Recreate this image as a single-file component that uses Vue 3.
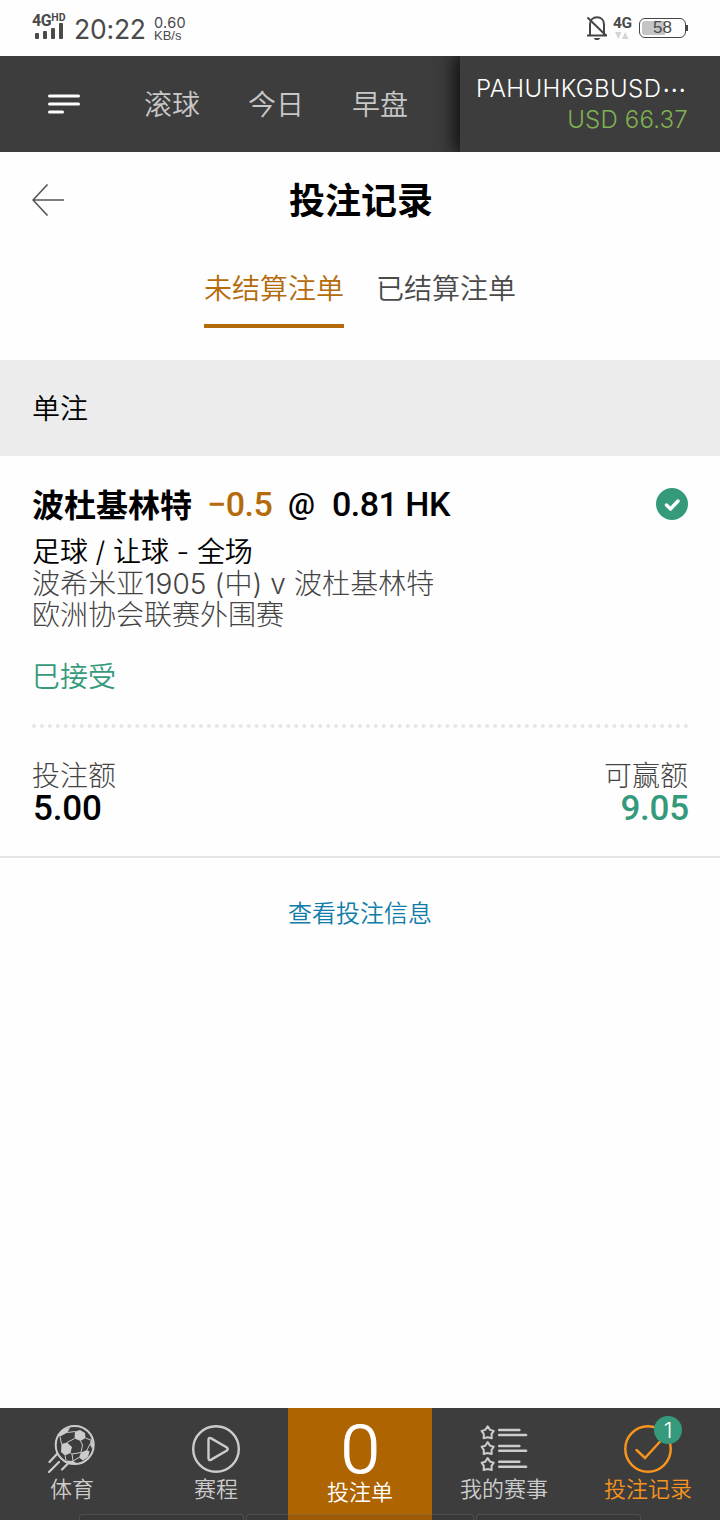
<script setup>
const tabs = [
  { label: '未结算注单', active: true },
  { label: '已结算注单', active: false },
]
const navLinks = ['滚球', '今日', '早盘']
const starRows = [7.9, 24.4, 41]
</script>

<template>
  <div class="screen">
    <header class="status">
      <div class="signal">
        <div class="net">4G<span class="hd">HD</span></div>
        <svg class="bars" width="28" height="16" viewBox="0 0 28 16">
          <g fill="#4a4a4a">
            <rect x="0" y="10" width="4" height="6" rx="1" />
            <rect x="8" y="8" width="4" height="8" rx="1" />
            <rect x="16" y="5" width="4" height="11" rx="1" />
            <rect x="24" y="0" width="4" height="16" rx="1" />
          </g>
        </svg>
      </div>
      <div class="clock">20:22</div>
      <div class="speed"><span class="rate">0.60</span><span class="unit">KB/s</span></div>
      <svg class="bell" width="22" height="26" viewBox="0 0 22 26" fill="none" stroke="#454545" stroke-width="2">
        <path d="M4 20V9.500C4 5 7 2.200 11 2.200S18 5 18 9.500V20M1 20.500H21" />
        <path d="M1.500 2.500L20 20.500" />
        <path d="M7.500 23H14.500L12.500 25H9.500Z" fill="#454545" stroke="none" />
      </svg>
      <div class="data">
        <div class="net">4G</div>
        <svg width="14" height="7" viewBox="0 0 14 7" fill="#d5d5d5"><path d="M0 0H6.500L3.200 7ZM7 7H13.500L10.200 0Z" /></svg>
      </div>
      <div class="battery"><span class="level"></span><span class="pct">58</span></div>
      <span class="nub"></span>
    </header>

    <nav class="topnav">
      <svg class="menu" width="32" height="20" viewBox="0 0 32 20" stroke="#fff" stroke-width="3" stroke-linecap="round">
        <path d="M1.500 2H30.500M1.500 10H30.500M1.500 18H14.500" />
      </svg>
      <a v-for="l in navLinks" :key="l" class="navlink">{{ l }}</a>
      <div class="account">
        <div class="user">PAHUHKGBUSD<span class="more">⋯</span></div>
        <div class="balance">USD 66.37</div>
      </div>
    </nav>

    <div class="titlebar">
      <svg class="back" width="32" height="32" viewBox="0 0 32 32" fill="none" stroke="#555" stroke-width="1.600">
        <path d="M32 16H1M15.500 .5L1 16L15.500 31.500" />
      </svg>
      <h1>投注记录</h1>
    </div>

    <div class="tabs">
      <div v-for="t in tabs" :key="t.label" class="tab" :class="{ active: t.active }">{{ t.label }}</div>
    </div>

    <div class="section">单注</div>

    <article class="bet">
      <div class="pick">
        <span class="team">波杜基林特</span>
        <span class="handicap">−0.5</span>
        <span class="at">@</span>
        <span class="odds">0.81 HK</span>
        <svg class="ok" width="32" height="32" viewBox="0 0 32 32">
          <circle cx="16" cy="16" r="16" fill="#359a7c" />
          <path d="M10.500 17L14.500 21L22 13" fill="none" stroke="#fff" stroke-width="3.400" stroke-linecap="round" stroke-linejoin="round" />
        </svg>
      </div>
      <div class="market">足球 / 让球 - 全场</div>
      <div class="match">波希米亚1905 (中) v 波杜基林特</div>
      <div class="league">欧洲协会联赛外围赛</div>
      <div class="state">巳接受</div>
      <svg class="dots" width="656" height="4" viewBox="0 0 656 4">
        <path d="M2 2H655" stroke="#e6e6e6" stroke-width="4" stroke-linecap="round" stroke-dasharray="0 7.950" />
      </svg>
      <div class="amounts">
        <div><div class="label">投注额</div><div class="value">5.00</div></div>
        <div class="win"><div class="label">可赢额</div><div class="value">9.05</div></div>
      </div>
    </article>

    <a class="info">查看投注信息</a>

    <footer class="bottom">
      <div class="item">
        <svg width="48" height="48" viewBox="0 0 48 48" fill="none" stroke="#ccc">
          <circle cx="26.700" cy="20" r="19" stroke-width="2" />
          <g fill="#ccc" stroke="none">
            <path d="M27 6.500L32 5L37 8L37.500 13L32.500 16L26.500 13.500Z" />
            <path d="M13.500 19L19 17.500L24 22L22.500 28L17 30.500L13 27Z" />
            <path d="M33 27.500L39 25L41.500 26.500L40 32L35 35.500L31 32.500Z" />
            <path d="M10 10.500L16 4L22 3L19.500 7.500L12 11.500Z" />
            <path d="M43 12.500L45.500 20L44 24L42 19Z" />
            <path d="M18 35.500L25 36L30 39L21 38.500Z" />
          </g>
          <path d="M19.500 7.500L27 6.500M26.500 13.500L19 17.500M32.500 16L34.500 20L33 27.500L24 29L22.500 28M37.500 13L42.500 15M24 29L25 36M31 32.500L25 36M13.500 19L12 11.500M39 25L42 19M17 30.500L18 35.500" stroke-width="1" />
          <path d="M9 29L1.500 37M11 37L1 47M20.500 38L14 44.500" stroke-width="2.200" stroke-linecap="round" />
        </svg>
        <span>体育</span>
      </div>
      <div class="item">
        <svg width="48" height="48" viewBox="0 0 48 48" fill="none" stroke="#ccc" stroke-width="2.400">
          <circle cx="24" cy="24" r="22.800" />
          <path d="M16.500 15Q16.500 12 19.200 13.400L34.500 22.300Q37 24 34.500 25.700L19.200 34.600Q16.500 36 16.500 33Z" />
        </svg>
        <span>赛程</span>
      </div>
      <div class="item slip">
        <div class="count">0</div>
        <span>投注单</span>
      </div>
      <div class="item">
        <svg width="48" height="50" viewBox="0 0 48 50" fill="none" stroke="#ccc" stroke-width="2.100">
          <g v-for="y in starRows" :key="y" :transform="`translate(7 ${y})`">
            <path d="M0-6.500L2.500-2.800L6.300-1.800L4 1.600L4.200 5.800L0 4.800L-4.200 5.800L-4 1.600L-6.300-1.800L-2.500-2.800Z" stroke-linejoin="round" />
            <path d="M12-2.600H33M12 2.500H40" stroke-width="2.600" stroke-linecap="round" />
          </g>
        </svg>
        <span>我的赛事</span>
      </div>
      <div class="item current">
        <svg width="48" height="48" viewBox="0 0 48 48" fill="none" stroke="#f7941d" stroke-width="2.500">
          <circle cx="24" cy="24" r="22.700" />
          <path d="M12.500 25L21 33L37 15.500" stroke-linecap="round" />
        </svg>
        <span>投注记录</span>
        <b class="badge">1</b>
      </div>
      <div class="keys"><i class="side"></i><i class="mid"></i><i class="side"></i></div>
    </footer>
  </div>
</template>

<style>
body { margin: 0; background: #fff; }
</style>

<style scoped>
.screen {
  width: 720px; height: 1520px; display: flex; flex-direction: column; overflow: hidden;
  background: #fefefe; color: #000; font-family: Inter, "Noto Sans CJK SC", sans-serif; font-weight: 350;
  white-space: nowrap;
}
.status { height: 56px; flex: none; display: flex; align-items: flex-start; color: #4a4a4a; box-sizing: border-box; padding-left: 32px; }
.signal { width: 42px; padding-top: 12px; display: flex; flex-direction: column; }
.net { font: 700 16px/17px Roboto, sans-serif; letter-spacing: -.4px; }
.hd { font-size: 10.500px; vertical-align: 5px; line-height: 1px; letter-spacing: 0; }
.bars { margin: -6px 0 0 3px; }
.clock { font: 400 26.500px/32px Inter, sans-serif; width: 80px; padding-top: 13px; letter-spacing: -.2px; }
.speed { display: flex; flex-direction: column; padding-top: 16px; width: 432px; }
.rate { font: 400 14.500px/13px Inter, sans-serif; letter-spacing: .3px; }
.unit { font: 400 13px/13px "Liberation Sans", sans-serif; }
.bell { margin-top: 15px; flex: none; }
.data { width: 31px; padding: 15px 0 0 5px; box-sizing: border-box; display: flex; flex-direction: column; }
.data .net { font-size: 15.500px; }
.data svg { margin: 0 0 0 2px; }
.battery {
  margin-top: 18px; width: 47px; height: 20px; flex: none; box-sizing: border-box; border: 1.500px solid #454545; border-radius: 6px;
  padding: 2px; display: grid; align-items: center;
}
.level { grid-area: 1 / 1; width: 23px; height: 14px; background: #c5c5c5; border-radius: 3px 0 0 3px; }
.pct { grid-area: 1 / 1; text-align: center; font: 400 17px/14px "Liberation Sans", sans-serif; }
.nub { margin-top: 25px; width: 2px; height: 6px; background: #454545; }

.topnav { height: 96px; flex: none; background: #3d3d3d; display: flex; align-items: center; color: #c8c8c8; }
.menu { margin: 0 64px 0 48px; }
.navlink { font-size: 28px; line-height: 40px; width: 56px; margin-right: 48px; padding-top: 1px; }
.account {
  margin-left: 4px; width: 260px; height: 96px; box-sizing: border-box; background: #3d3d3d; padding: 17px 32px 0 16px;
  box-shadow: -4px 0 16px 2px #111; clip-path: inset(0 0 0 -30px);
}
.user { color: #fff; font-size: 24px; line-height: 31px; display: flex; letter-spacing: .4px; }
.more { font-family: "Noto Sans CJK SC"; font-weight: 400; margin-left: 1px; }
.balance { color: #7fb154; font-size: 24px; line-height: 31px; text-align: right; letter-spacing: .2px; }

.titlebar { height: 96px; flex: none; display: grid; grid-template-columns: 32px 1fr 32px; align-items: center; padding: 0 32px; }
h1 { margin: 0; padding: 2px 0 0 2px; text-align: center; font-size: 36px; line-height: 48px; font-weight: 700; }
.tabs { height: 112px; flex: none; display: flex; justify-content: center; gap: 32px; align-items: flex-start; }
.tab { height: 80px; box-sizing: border-box; font-size: 28px; line-height: 80px; padding-top: 1px; color: #4a4a4a; }
.active { color: #b46b0a; border-bottom: 4px solid #b46b0a; }
.section { height: 96px; flex: none; box-sizing: border-box; background: #ececec; padding: 1px 0 0 32px; font-size: 28px; line-height: 96px; }

.bet { height: 402px; flex: none; box-sizing: border-box; border-bottom: 2px solid #e4e4e4; padding: 24px 32px 0; }
.pick { display: flex; align-items: center; height: 48px; font: 500 34px/48px Roboto, sans-serif; letter-spacing: -.5px; }
.team { font: 700 32px/48px "Noto Sans CJK SC", sans-serif; width: 175px; letter-spacing: 0; margin-top: -3px; }
.handicap { color: #b46b0a; width: 81px; }
.at { width: 44px; font-size: 30px; }
.ok { margin-left: auto; }
.market { margin-top: 8px; font-size: 28px; line-height: 32px; letter-spacing: -.1px; }
.match, .league { font-size: 28px; line-height: 31px; color: #444; font-weight: 300; }
.match { letter-spacing: .1px; position: relative; top: 1px; }
.league { position: relative; top: 1px; }
.state { margin-top: 31px; font-size: 28px; line-height: 32px; color: #359a7c; }
.dots { display: block; margin-top: 31px; }
.amounts { display: flex; justify-content: space-between; margin-top: 32px; }
.label { font-size: 28px; line-height: 32px; color: #444; font-weight: 300; }
.value { font: 500 35px/34px Roboto, sans-serif; letter-spacing: -.2px; margin-left: 1px; }
.win { text-align: right; }
.win .value { color: #359a7c; margin-right: -1px; }
.info { margin: 38px auto 0; font-size: 24px; line-height: 36px; color: #0f7da8; }

.bottom { margin-top: auto; height: 112px; flex: none; background: #3d3d3d; display: flex; color: #ccc; position: relative; }
.item { flex: 1; display: flex; flex-direction: column; align-items: center; padding-top: 17px; font-size: 22px; line-height: 32px; position: relative; }
.item svg { height: 48px; flex: none; }
.slip { background: #ae6400; color: #fff; padding-top: 14px; }
.count { font: 300 66px/57px Roboto, sans-serif; height: 54px; -webkit-text-stroke: .9px #fff; transform: scaleX(1.08); }
.current { color: #f7941d; }
.badge {
  position: absolute; left: 78px; top: 8px; width: 28px; height: 28px; border-radius: 50%; background: #359a7c; color: #fff;
  font: 350 22px/28px Inter, sans-serif; text-align: center;
}
.keys { position: absolute; left: 79px; bottom: 0; width: 562px; height: 6px; display: flex; gap: 2px; overflow: hidden; }
.keys i { height: 10px; box-sizing: border-box; border: 1px solid rgba(130, 130, 130, .3); border-radius: 3px; background: rgba(30, 30, 30, .12); }
.side { width: 165px; }
.mid { flex: 1; }
</style>
